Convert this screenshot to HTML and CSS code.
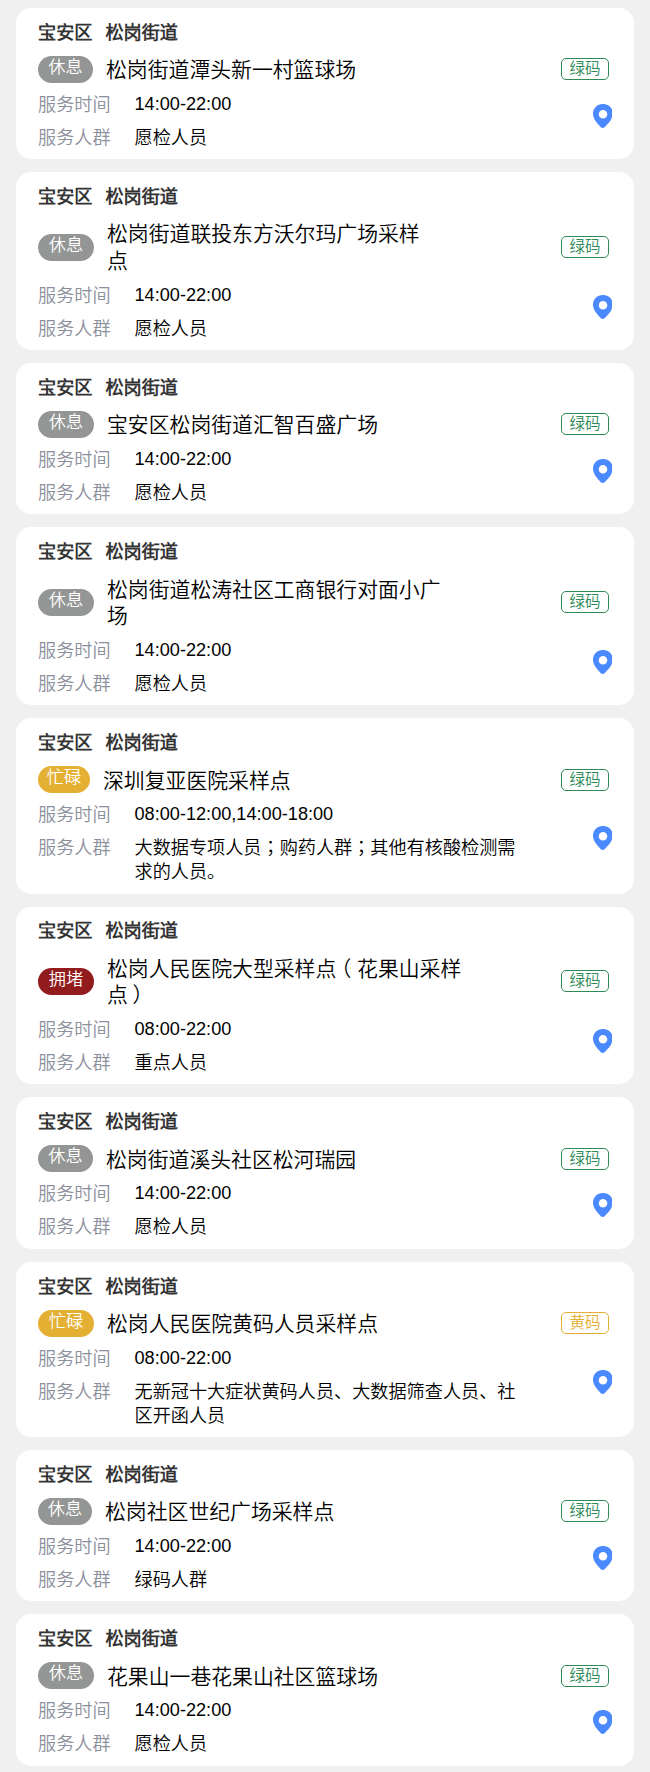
FILE: index.html
```
<!DOCTYPE html>
<html lang="zh-CN">
<head>
<meta charset="utf-8">
<title>采样点</title>
<link rel="stylesheet" href="styles.css">
</head>
<body>
<svg class="defs" aria-hidden="true"><symbol id="pin" viewBox="0 0 19 24"><path fill="#4a89fe" fill-rule="evenodd" d="M9.700 0C4.400 0 0 4.200 0 9.600c0 5.300 3.800 9.400 7.800 13.600q1.900 1.600 3.800 0C15.500 19.200 19 16 19 12V5.500C17.500 2.100 14.200 0 9.700 0ZM10 6a4.300 4.300 0 1 1 0 8.600A4.300 4.300 0 0 1 10 6Z"/></symbol></svg>
<main class="list" id="list"></main>
<script src="app.js"></script>
</body>
</html>
```
FILE: styles.css
```
* { box-sizing: border-box; }
body {
  margin: 0;
  background: #f0f0f0;
  font-family: "Liberation Sans", "Noto Sans CJK SC DemiLight", "Noto Sans CJK SC", sans-serif;
  font-weight: 350;
  font-size: 18.15px;
  color: #000;
}
.defs { position: absolute; width: 0; height: 0; }
.list { display: flex; flex-direction: column; gap: 13px; padding: 8px 16px 0; }
.card { background: #fff; border-radius: 15px; padding: 12.800px 22px 9.500px; }
.area { display: flex; gap: 13px; line-height: 24px; font-weight: 700; color: #333; }
.site { display: flex; align-items: center; margin-top: 12.400px; }
.status {
  flex: none;
  width: 56px;
  height: 27px;
  border-radius: 13.5px;
  margin-top: -2px;
  line-height: 23px;
  font-size: 17.2px;
  text-align: center;
  color: #fff;
  background: #949695;
}
.w55 { width: 55px; }
.w54 { width: 54px; }
.w52 { width: 52px; }
.busy { background: #e4b033; }
.crowded { background: #921b1d; }
.name { flex: 1; margin: 0 0 0 13px; font-size: 20.85px; line-height: 26.6px; white-space: nowrap; }
.code {
  flex: none;
  width: 48px;
  height: 22px;
  margin: -2.500px 3px 0 0;
  border: 1px solid #2e8b57;
  border-radius: 5px;
  color: #2e8b57;
  font-size: 15.5px;
  line-height: 19px;
  text-align: center;
}
.yellow { color: #e4b033; border-color: #e4b033; }
.info { display: flex; align-items: center; justify-content: space-between; margin-top: 9px; }
.rows { display: grid; grid-template-columns: 96.5px auto; row-gap: 9px; line-height: 24px; }
.label { color: #8c8f9c; }
.time { margin-top: -1px; }
.pin { width: 19px; height: 24px; margin: 0 0 10.600px; }
.mid { font-family: "Noto Sans CJK TC DemiLight", "Noto Sans CJK TC", sans-serif; line-height: 0; }
.paren { font-feature-settings: "halt"; padding: 0 5.700px 0 4.700px; }
```
FILE: app.js
```
const sites = [
  ["休息", "w55", "松岗街道潭头新一村篮球场", "绿码", "14:00-22:00", "愿检人员"],
  ["休息", "", "松岗街道联投东方沃尔玛广场采样<br>点", "绿码", "14:00-22:00", "愿检人员"],
  ["休息", "", "宝安区松岗街道汇智百盛广场", "绿码", "14:00-22:00", "愿检人员"],
  ["休息", "", "松岗街道松涛社区工商银行对面小广<br>场", "绿码", "14:00-22:00", "愿检人员"],
  ["忙碌", "busy w52", "深圳复亚医院采样点", "绿码", "08:00-12:00,14:00-18:00", "大数据专项人员<span class=\"mid\" lang=\"zh-TW\">；</span>购药人群<span class=\"mid\" lang=\"zh-TW\">；</span>其他有核酸检测需<br>求的人员。"],
  ["拥堵", "crowded", "松岗人民医院大型采样点<span class=\"paren\">（</span>花果山采样<br>点<span class=\"paren\">）</span>", "绿码", "08:00-22:00", "重点人员"],
  ["休息", "w55", "松岗街道溪头社区松河瑞园", "绿码", "14:00-22:00", "愿检人员"],
  ["忙碌", "busy", "松岗人民医院黄码人员采样点", "黄码", "08:00-22:00", "无新冠十大症状黄码人员、大数据筛查人员、社<br>区开函人员"],
  ["休息", "w54", "松岗社区世纪广场采样点", "绿码", "14:00-22:00", "绿码人群"],
  ["休息", "", "花果山一巷花果山社区篮球场", "绿码", "14:00-22:00", "愿检人员"]
];
document.getElementById("list").innerHTML = sites.map(([status, cls, name, code, time, people]) => `
<article class="card">
  <div class="area"><span>宝安区</span><span>松岗街道</span></div>
  <div class="site">
    <span class="status ${cls}">${status}</span>
    <span class="name">${name}</span>
    <span class="code ${code === "黄码" ? "yellow" : ""}">${code}</span>
  </div>
  <div class="info">
    <div class="rows">
      <span class="label">服务时间</span><span class="time">${time}</span>
      <span class="label">服务人群</span><span>${people}</span>
    </div>
    <svg class="pin"><use href="#pin"/></svg>
  </div>
</article>`).join("");
```
